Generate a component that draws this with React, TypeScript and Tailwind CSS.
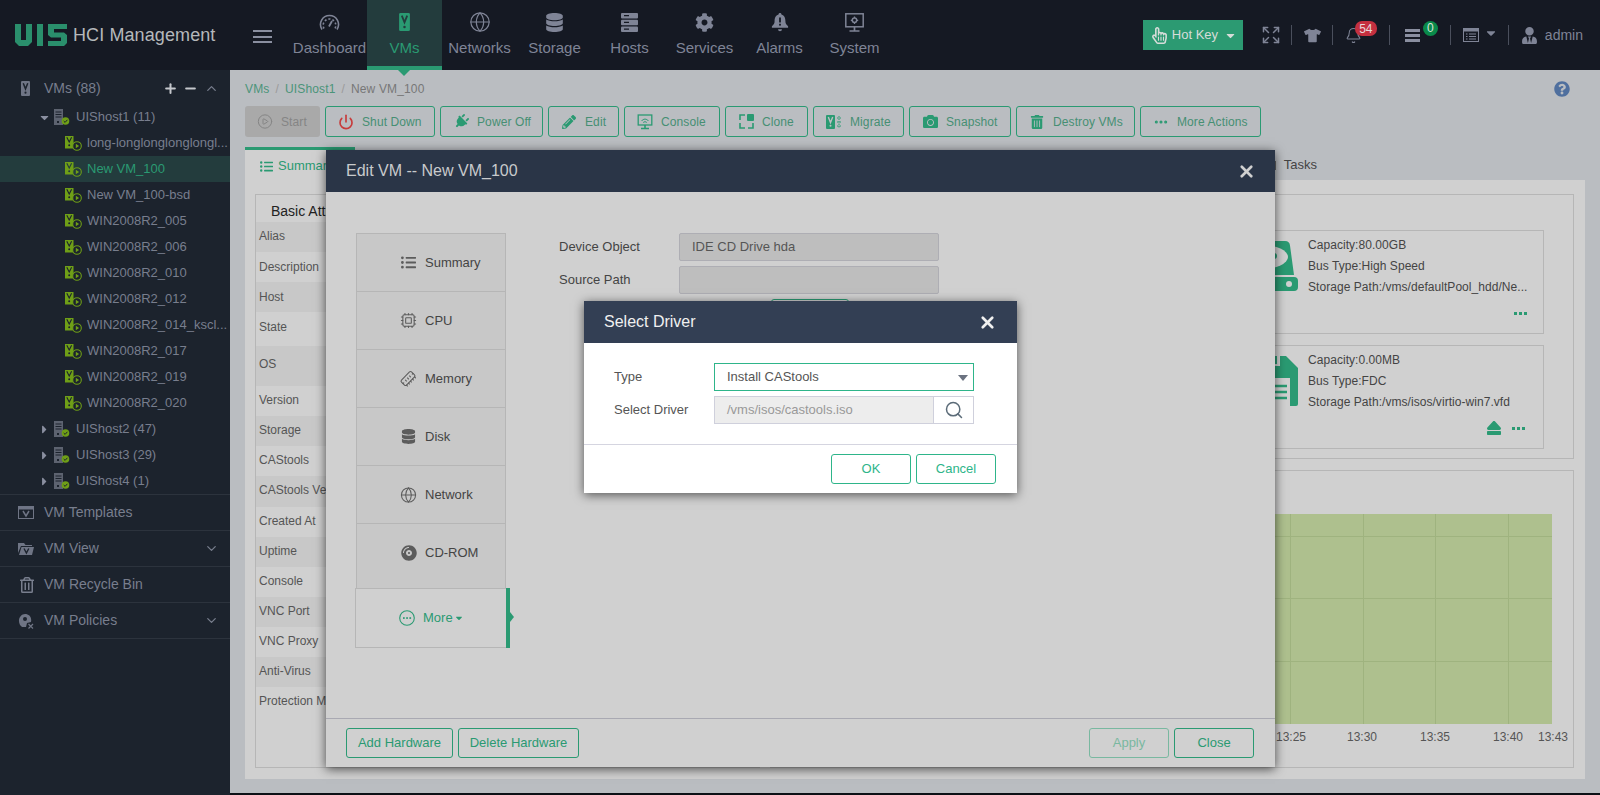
import React from "react";
import { Globe, Power, CirclePlay, Ellipsis, Cpu, MemoryStick, Search, Bell, Expand, Plus, Minus, ChevronUp, ChevronDown, X } from "lucide-react";
import { FaDatabase, FaCog, FaPlug, FaPencilAlt, FaCamera, FaTrashAlt, FaListUl, FaCompactDisc, FaEject, FaTshirt, FaUserTie, FaRegHandPointer, FaCaretDown, FaCaretRight, FaQuestionCircle, FaRegTrashAlt } from "react-icons/fa";

const Vm = ({ w, h, fill, cut }: { w: number; h: number; fill: string; cut: string }) => (
  <svg width={w} height={h} viewBox="0 0 12 20">
    <rect width="12" height="20" rx="1.5" fill={fill} />
    <path d="M3 3l3 7.5L9 3" stroke={cut} strokeWidth="2" fill="none" />
    <circle cx="6" cy="15.5" r="1.4" fill={cut} />
  </svg>
);

const Leaf = ({ bg }: { bg: string }) => (
  <svg width="17" height="15" viewBox="0 0 17 15" className="shrink-0">
    <rect x="0" y="0" width="8.5" height="12.5" fill="#6f9f17" />
    <path d="M1.8 1.2l2.4 4.8 2.4-4.8" stroke={bg} strokeWidth="1.1" fill="none" />
    <circle cx="4.2" cy="9.3" r="1" fill={bg} />
    <circle cx="12" cy="10" r="4.3" fill={bg} stroke="#6f9f17" strokeWidth="1.1" />
    <path d="M10.8 7.8v4.4l3.3-2.2z" fill="#6f9f17" />
  </svg>
);

const Host = () => (
  <svg width="16" height="16" viewBox="0 0 16 16" className="shrink-0">
    <rect x="0" y="0" width="9" height="16" fill="#5d6370" />
    <path d="M1.5 3h6M1.5 5.5h6M1.5 8h6" stroke="#1c232d" strokeWidth="1" />
    <rect x="3" y="12" width="2" height="2" fill="#1c232d" />
    <circle cx="11.5" cy="12" r="3.8" fill="#6f9f17" />
    <path d="M9.7 12l1.4 1.4 2.3-2.6" stroke="#1c232d" strokeWidth="1" fill="none" />
  </svg>
);

const Logo = () => (
  <svg width="52" height="22" viewBox="0 0 52 22" className="shrink-0">
    <path fill="#2a8f6c" d="M0 0H6V16H11V0H17V18L13 22H4L0 18Z" />
    <rect x="22" width="6" height="22" fill="#2a8f6c" />
    <path fill="#2a8f6c" d="M33 0H52V5H39V8.5H49L52 11V19L49 22H33V17H46V13.5H36L33 11Z" />
  </svg>
);

const Gauge = () => (
  <svg width="21" height="17" viewBox="0 0 21 17" fill="none" stroke="#7f8496" strokeWidth="1.6">
    <path d="M3 15.5C-1 9 3.5 1.5 10.5 1.5S22 9 18 15.5" />
    <path d="M5 14.5C2.5 10 6 5 10.5 5S18.5 10 16 14.5" strokeDasharray="2 2" />
    <path d="M10 12.5L13 7" strokeWidth="1.8" />
  </svg>
);

const Rack = () => (
  <svg width="17" height="19" viewBox="0 0 17 19" fill="currentColor">
    <rect width="17" height="5.5" rx="1" />
    <rect y="6.7" width="17" height="5.5" rx="1" />
    <rect y="13.4" width="17" height="5.5" rx="1" />
    <path d="M3 2.7h5M3 9.4h5M3 16.1h5" stroke="#151923" strokeWidth="1.2" />
  </svg>
);

const AlarmBell = () => (
  <svg width="18" height="20" viewBox="0 0 20 22" fill="currentColor">
    <path d="M10 1c1 0 1.6.7 1.6 1.6C15 3.5 16 6.5 16 10c0 3 1 4.2 3 5.6V17.5H1v-1.9C3 14.2 4 13 4 10c0-3.5 1-6.5 4.4-7.4C8.4 1.7 9 1 10 1zM7.8 19h4.4a2.2 2.2 0 01-4.4 0z" />
    <rect x="9" y="6" width="2" height="5.5" fill="#151923" />
    <rect x="9" y="13" width="2" height="2" fill="#151923" />
  </svg>
);

const SystemIcon = () => (
  <svg width="19" height="19" viewBox="0 0 19 19" fill="none" stroke="currentColor">
    <rect x="0.8" y="0.8" width="17.4" height="13" strokeWidth="1.5" />
    <circle cx="9.5" cy="7.3" r="2.2" strokeWidth="1.5" />
    <path d="M9.5 3.6v1.4M9.5 9.6v1.4M5.8 7.3h1.4M11.8 7.3h1.4" strokeWidth="1.3" />
    <path d="M4.5 18h10M9.5 14v4" strokeWidth="1.7" />
  </svg>
);

const navItems: { label: string; icon: React.ReactNode; active?: boolean }[] = [
  { label: "Dashboard", icon: <Gauge /> },
  { label: "VMs", icon: <Vm w={11} h={18} fill="#2a9a72" cut="#233c3d" />, active: true },
  { label: "Networks", icon: <Globe size={22} strokeWidth={1.3} /> },
  { label: "Storage", icon: <FaDatabase size={19} /> },
  { label: "Hosts", icon: <Rack /> },
  { label: "Services", icon: <FaCog size={19} /> },
  { label: "Alarms", icon: <AlarmBell /> },
  { label: "System", icon: <SystemIcon /> },
];

const leaves = ["long-longlonglonglongl...", "New VM_100", "New VM_100-bsd", "WIN2008R2_005", "WIN2008R2_006", "WIN2008R2_010", "WIN2008R2_012", "WIN2008R2_014_kscl...", "WIN2008R2_017", "WIN2008R2_019", "WIN2008R2_020"];

const Console = () => (
  <svg width="16" height="16" viewBox="0 0 15 16" fill="none" stroke="#2a9a72">
    <rect x="0.7" y="1" width="13.6" height="10" strokeWidth="1.3" />
    <path d="M4 7c2-2.5 5-2.5 7 0M5.7 8.5c1-1 2.6-1 3.6 0" strokeWidth="1" />
    <path d="M3.5 14.5h8M7.5 11v3" strokeWidth="1.6" />
  </svg>
);
const Clone = () => (
  <svg width="15" height="15" viewBox="0 0 15 15">
    <rect x="8" y="0" width="7" height="7" rx="1" fill="#2a9a72" />
    <path d="M6 1H1v5M1 9v5h5M9 14h5V9" stroke="#2a9a72" strokeWidth="1.6" fill="none" />
  </svg>
);
const Migrate = () => (
  <svg width="16" height="14" viewBox="0 0 16 14">
    <rect width="9" height="14" rx="1" fill="#2a9a72" />
    <path d="M2.3 2l2.2 5.5L6.7 2" stroke="#bdbfc3" strokeWidth="1.4" fill="none" />
    <circle cx="4.5" cy="10.8" r="1" fill="#bdbfc3" />
    <path d="M13 1v12M11 3h4M11 7h4M11 11h4" stroke="#2a9a72" strokeWidth="1" strokeDasharray="1.5 1" fill="none" />
  </svg>
);

const tools: { label: string; icon: React.ReactNode; cls: string; off?: boolean }[] = [
  { label: "Start", icon: <CirclePlay size={17} strokeWidth={1.5} />, cls: "w-[75px]", off: true },
  { label: "Shut Down", icon: <Power size={18} strokeWidth={2.5} color="#c73c3c" />, cls: "w-[110px]" },
  { label: "Power Off", icon: <FaPlug size={15} color="#2a9a72" className="rotate-45" />, cls: "w-[103px]" },
  { label: "Edit", icon: <FaPencilAlt size={14} color="#2a9a72" />, cls: "w-[71px]" },
  { label: "Console", icon: <Console />, cls: "w-[96px]" },
  { label: "Clone", icon: <Clone />, cls: "w-[83px]" },
  { label: "Migrate", icon: <Migrate />, cls: "w-[91px]" },
  { label: "Snapshot", icon: <FaCamera size={15} color="#2a9a72" />, cls: "w-[102px]" },
  { label: "Destroy VMs", icon: <FaTrashAlt size={14} color="#2a9a72" />, cls: "w-[119px]" },
  { label: "More Actions", icon: <Ellipsis size={16} color="#2a9a72" strokeWidth={2.6} />, cls: "w-[121px]" },
];

const attrs: { label: string; cls: string }[] = [
  { label: "Alias", cls: "h-[30px] bg-[#c8c8c8] pt-[6px]" },
  { label: "Description", cls: "h-[30px] pt-[7px]" },
  { label: "Host", cls: "h-[30px] bg-[#c8c8c8] pt-[7px]" },
  { label: "State", cls: "h-[34px] pt-[7px]" },
  { label: "OS", cls: "h-[40px] bg-[#c8c8c8] pt-[10px]" },
  { label: "Version", cls: "h-[30px] pt-[6px]" },
  { label: "Storage", cls: "h-[30px] bg-[#c8c8c8] pt-[6px]" },
  { label: "CAStools", cls: "h-[30px] pt-[6px]" },
  { label: "CAStools Version", cls: "h-[31px] bg-[#c8c8c8] pt-[6px]" },
  { label: "Created At", cls: "h-[30px] pt-[6px]" },
  { label: "Uptime", cls: "h-[30px] bg-[#c8c8c8] pt-[6px]" },
  { label: "Console", cls: "h-[30px] pt-[6px]" },
  { label: "VNC Port", cls: "h-[30px] bg-[#c8c8c8] pt-[6px]" },
  { label: "VNC Proxy", cls: "h-[30px] pt-[6px]" },
  { label: "Anti-Virus", cls: "h-[30px] bg-[#c8c8c8] pt-[6px]" },
  { label: "Protection Mode", cls: "h-[30px] pt-[6px]" },
];

const Dots = () => (
  <div className="flex gap-[2px]">
    <span className="h-[3px] w-[3px] bg-[#2a9a72]" />
    <span className="h-[3px] w-[3px] bg-[#2a9a72]" />
    <span className="h-[3px] w-[3px] bg-[#2a9a72]" />
  </div>
);

const Hdd = () => (
  <svg width="72" height="50" viewBox="0 0 72 50">
    <path d="M13 0H59a5 5 0 015 4.5L68 34H4L8 4.5A5 5 0 0113 0Z" fill="#2a9a72" />
    <ellipse cx="36" cy="16" rx="26" ry="12" fill="#d0d0d0" />
    <ellipse cx="48" cy="15" rx="3" ry="3" fill="#2a9a72" />
    <rect x="0" y="36" width="72" height="14" rx="4" fill="#2a9a72" />
    <circle cx="63" cy="43" r="3" fill="#d0d0d0" />
  </svg>
);
const Floppy = () => (
  <svg width="50" height="50" viewBox="0 0 50 50">
    <path d="M2 0H38L50 12V48a2 2 0 01-2 2H2a2 2 0 01-2-2V2a2 2 0 012-2Z" fill="#2a9a72" />
    <rect x="10" y="0" width="22" height="10" fill="#d0d0d0" />
    <rect x="24" y="0" width="5" height="8" fill="#2a9a72" />
    <rect x="8" y="22" width="34" height="28" fill="#d0d0d0" />
    <path d="M11 30h28M11 36h28M11 42h28" stroke="#2a9a72" strokeWidth="2.4" />
  </svg>
);

const Card = ({ icon, lines, extra }: { icon: React.ReactNode; lines: string[]; extra?: React.ReactNode }) => (
  <div className="flex h-[104px] w-[513px] border border-[#b6b6b6]">
    <div className="flex w-[266px] shrink-0 justify-end pt-[10px]">{icon}</div>
    <div className="ml-[10px] flex-1 pt-[4px] pr-[18px] text-[12px] leading-[21px] tracking-[0.05px] text-[#444]">
      {lines.map((l) => (
        <div key={l} className="whitespace-nowrap">{l}</div>
      ))}
      <div className="mt-[8px] flex h-[14px] items-center justify-end gap-[10px]">
        {extra}
        <Dots />
      </div>
    </div>
  </div>
);

const MoreIcon = () => (
  <svg width="16" height="16" viewBox="0 0 16 16" fill="none" stroke="currentColor" className="shrink-0">
    <circle cx="8" cy="8" r="7.3" strokeWidth="1.1" />
    <rect x="4" y="7.2" width="1.7" height="1.7" fill="currentColor" stroke="none" />
    <rect x="7.2" y="7.2" width="1.7" height="1.7" fill="currentColor" stroke="none" />
    <rect x="10.4" y="7.2" width="1.7" height="1.7" fill="currentColor" stroke="none" />
  </svg>
);

const hardware: { label: string; icon: React.ReactNode; cls: string }[] = [
  { label: "Summary", icon: <FaListUl size={15} />, cls: "h-[59px]" },
  { label: "CPU", icon: <Cpu size={17} strokeWidth={1.5} />, cls: "h-[59px]" },
  { label: "Memory", icon: <MemoryStick size={18} strokeWidth={1.5} className="-rotate-45" />, cls: "h-[59px]" },
  { label: "Disk", icon: <FaDatabase size={15} />, cls: "h-[59px]" },
  { label: "Network", icon: <Globe size={18} strokeWidth={1.5} />, cls: "h-[59px]" },
  { label: "CD-ROM", icon: <FaCompactDisc size={16} />, cls: "h-[66px] pb-[7px]" },
];

const GBtn = ({ label, cls, faded }: { label: string; cls: string; faded?: boolean }) => (
  <div className={`flex h-[30px] items-center justify-center rounded-[3px] border text-[13px] ${faded ? "border-[#79b8a0] text-[#79b8a0]" : "border-[#2a9a72] text-[#2a9a72]"} ${cls}`}>{label}</div>
);

function Chart() {
  const xs = [519, 592, 664, 737];
  const ys = [65, 127, 190];
  const labels: [number, string][] = [[520, "13:25"], [591, "13:30"], [664, "13:35"], [737, "13:40"], [782, "13:43"]];
  return (
    <svg width="802" height="296" viewBox="0 0 802 296" className="block">
      <rect x="30" y="43" width="751" height="210" fill="#aec08e" />
      {xs.map((x) => (
        <line key={x} x1={x + 0.5} x2={x + 0.5} y1="43" y2="253" stroke="#9fb37f" />
      ))}
      {ys.map((y) => (
        <line key={y} x1="30" x2="781" y1={y + 0.5} y2={y + 0.5} stroke="#9fb37f" />
      ))}
      {labels.map(([x, t]) => (
        <text key={t} x={x} y="270" textAnchor="middle" fontSize="12" fill="#555" fontFamily="Liberation Sans, Arial, sans-serif">{t}</text>
      ))}
    </svg>
  );
}

export default function App() {
  return (
    <div className="relative flex h-[795px] w-[1600px] flex-col overflow-hidden bg-[#babdc1] font-['Liberation_Sans',Arial,sans-serif]">
      {/* top bar */}
      <header className="flex h-[70px] shrink-0 bg-[#151923]">
        <div className="flex w-[253px] shrink-0 items-center pb-[1px] pl-[15px]">
          <Logo />
          <span className="mt-[2px] ml-[6px] text-[18px] tracking-[0.1px] text-[#b5b8bb]">HCI Management</span>
        </div>
        <div className="flex w-[39px] shrink-0 flex-col gap-[3.5px] pt-[30px]">
          <span className="h-[2px] w-[19px] bg-[#8a8fa0]" />
          <span className="h-[2px] w-[19px] bg-[#8a8fa0]" />
          <span className="h-[2px] w-[19px] bg-[#8a8fa0]" />
        </div>
        {navItems.map((n) => (
          <div key={n.label} className={`relative flex w-[75px] flex-col items-center ${n.active ? "bg-[#233c3d] text-[#2a9a72]" : "text-[#7f8496]"}`}>
            <div className="mt-[13px] flex h-[18px] items-center">{n.icon}</div>
            <div className="mt-[8px] whitespace-nowrap text-[15px] leading-[17px]">{n.label}</div>
            {n.active && (
              <>
                <span className="absolute bottom-0 left-0 h-[4px] w-full bg-[#2a9a72]" />
                <span className="absolute top-[70px] left-[31px] h-0 w-0 border-x-[6px] border-t-[6px] border-x-transparent border-t-[#2a9a72]" />
              </>
            )}
          </div>
        ))}
        <div className="ml-auto flex items-center pr-[17px] text-[#7f8496]">
          <div className="flex h-[30px] w-[100px] items-center bg-[#2c9a72] pl-[8px] text-[13px] text-[#d6dcd9]">
            <FaRegHandPointer size={17} />
            <span className="ml-[4px]">Hot Key</span>
            <FaCaretDown size={13} className="ml-[6px]" />
          </div>
          <Expand size={20} strokeWidth={1.8} className="ml-[18px]" />
          <span className="ml-[10px] h-[20px] w-px bg-[#4a4f5c]" />
          <FaTshirt size={17} className="ml-[12px]" />
          <span className="ml-[11px] h-[20px] w-px bg-[#4a4f5c]" />
          <div className="relative ml-[12px] h-[16px] w-[44px]">
            <Bell size={17} strokeWidth={1.5} />
            <span className="absolute -top-[6px] left-[10px] flex h-[15px] w-[22px] items-center justify-center rounded-[7px] bg-[#c4303f] text-[12px] text-[#e8d8da]">54</span>
          </div>
          <span className="h-[20px] w-px bg-[#4a4f5c]" />
          <div className="relative ml-[15px] flex h-[13px] w-[45px] flex-col gap-[2px]">
            <span className="h-[3px] w-[15px] bg-[#8a8fa0]" />
            <span className="h-[3px] w-[15px] bg-[#8a8fa0]" />
            <span className="h-[3px] w-[15px] bg-[#8a8fa0]" />
            <span className="absolute -top-[8px] left-[18px] flex h-[15px] w-[15px] items-center justify-center rounded-full bg-[#0a8a4a] text-[12px] text-[#d8e4dc]">0</span>
          </div>
          <span className="h-[20px] w-px bg-[#4a4f5c]" />
          <svg width="16" height="14" viewBox="0 0 16 14" className="ml-[12px]" fill="none" stroke="#7f8496">
            <rect x="0.5" y="0.5" width="15" height="13" />
            <rect x="0" y="0" width="16" height="3" fill="#7f8496" />
            <path d="M3 6h1.5M6 6h7M3 8.5h1.5M6 8.5h7M3 11h1.5M6 11h7" />
          </svg>
          <FaCaretDown size={14} className="-mt-[5px] ml-[5.5px]" />
          <span className="ml-[9.5px] h-[20px] w-px bg-[#4a4f5c]" />
          <FaUserTie size={17} className="ml-[12px]" />
          <span className="ml-[7px] text-[14px]">admin</span>
        </div>
      </header>

      <div className="flex min-h-0 flex-1">
        {/* sidebar */}
        <aside className="w-[230px] shrink-0 bg-[#1c232d] text-[13px] text-[#787e8d]">
          <div className="flex h-[34px] items-center pt-[2px] pr-[11px] pl-[21px]">
            <Vm w={9} h={15} fill="#6f7585" cut="#1c232d" />
            <span className="ml-[14px] text-[14px]">VMs (88)</span>
            <Plus size={15} strokeWidth={3.2} className="ml-auto text-[#c4c7cc]" />
            <Minus size={15} strokeWidth={3.2} className="ml-[5px] text-[#c4c7cc]" />
            <ChevronUp size={15} strokeWidth={2} className="ml-[6px]" />
          </div>
          <div className="flex h-[26px] items-center pl-[38px]">
            <FaCaretDown size={13} className="text-[#8a8fa0]" />
            <span className="ml-[3px]"><Host /></span>
            <span className="ml-[6px]">UIShost1 (11)</span>
          </div>
          {leaves.map((l) => {
            const sel = l === "New VM_100";
            return (
              <div key={l} className={`flex h-[26px] items-center pl-[65px] ${sel ? "bg-[#233c3d] text-[#2a9a72]" : ""}`}>
                <Leaf bg={sel ? "#233c3d" : "#1c232d"} />
                <span className="ml-[5px] whitespace-nowrap">{l}</span>
              </div>
            );
          })}
          {["UIShost2 (47)", "UIShost3 (29)", "UIShost4 (1)"].map((h) => (
            <div key={h} className="flex h-[26px] items-center pl-[38px]">
              <FaCaretRight size={13} className="text-[#8a8fa0]" />
              <span className="ml-[3px]"><Host /></span>
              <span className="ml-[6px]">{h}</span>
            </div>
          ))}
          <div className="border-b border-[#2c333d]" />
          <div className="flex h-[36px] items-center border-b border-[#2c333d] pl-[18px] text-[14px]">
            <svg width="16" height="13" viewBox="0 0 16 13" fill="none" stroke="#6f7585">
              <rect x="0.5" y="0.5" width="15" height="12" />
              <rect x="0" y="0" width="16" height="3" fill="#6f7585" />
              <path d="M5 5l3 5 3-5" strokeWidth="1.5" />
            </svg>
            <span className="ml-[10px]">VM Templates</span>
          </div>
          <div className="flex h-[36px] items-center border-b border-[#2c333d] pr-[11px] pl-[18px] text-[14px]">
            <svg width="16" height="13" viewBox="0 0 16 13">
              <path d="M0 1h6l1.5 2H14v1H3L0 11z" fill="#6f7585" />
              <path d="M3.5 5H16l-2 8H1z" fill="#6f7585" />
              <path d="M6 6.5l2.4 4.5 2.4-4.5" stroke="#1c232d" strokeWidth="1.4" fill="none" />
            </svg>
            <span className="ml-[10px]">VM View</span>
            <ChevronDown size={15} className="ml-auto" />
          </div>
          <div className="flex h-[36px] items-center border-b border-[#2c333d] pl-[19px] text-[14px]">
            <FaRegTrashAlt size={16} />
            <span className="ml-[9px]">VM Recycle Bin</span>
          </div>
          <div className="flex h-[36px] items-center border-b border-[#2c333d] pr-[11px] pl-[18px] text-[14px]">
            <svg width="16" height="16" viewBox="0 0 16 16" fill="none">
              <path d="M2 12C-1 6 3 1 7 1s7 3 6 8l-4 1-1 4H4z" fill="#6f7585" />
              <circle cx="7" cy="6" r="2" fill="#1c232d" />
              <path d="M10.5 11l4.5 4.5M15 11l-4.5 4.5" stroke="#6f7585" strokeWidth="1.2" />
            </svg>
            <span className="ml-[10px]">VM Policies</span>
            <ChevronDown size={15} className="ml-auto" />
          </div>
        </aside>

        {/* main */}
        <main className="flex min-w-0 flex-1 flex-col text-[12px]">
          <div className="flex h-[36px] shrink-0 items-center px-[15px] pt-[2px] tracking-[0.15px]">
            <span className="text-[#4b9479]">VMs</span>
            <span className="mx-[6px] text-[#9a9a9a]">/</span>
            <span className="text-[#4b9479]">UIShost1</span>
            <span className="mx-[6px] text-[#9a9a9a]">/</span>
            <span className="text-[#777]">New VM_100</span>
            <FaQuestionCircle size={16} color="#4f6f9e" className="mr-[15px] ml-auto" />
          </div>
          <div className="flex h-[31px] shrink-0 gap-[5px] pl-[15px] tracking-[0.1px]">
            {tools.map((t) => (
              <div key={t.label} className={`flex items-center whitespace-nowrap rounded-[3px] ${t.cls} ${t.off ? "bg-[#a9a9a9] text-[#858585]" : "border border-[#2a9a72] text-[#468f73]"}`}>
                <span className="ml-[12px] flex w-[16px] items-center justify-center">{t.icon}</span>
                <span className="ml-[8px]">{t.label}</span>
              </div>
            ))}
          </div>
          <div className="mt-[10px] flex h-[33px] shrink-0 pl-[15px]">
            <div className="flex w-[110px] items-center border-t-[3px] border-[#2a9a72] bg-[#d0d0d0] pt-[2px] pl-[15px] text-[13px] text-[#2a9a72]">
              <FaListUl size={13} />
              <span className="ml-[5px]">Summary</span>
            </div>
            <div className="ml-auto flex items-center pt-[3px] pr-[283px] text-[13px] text-[#444]">
              <span className="mr-[8px] h-[9px] w-[3px] bg-[#666]" />
              Tasks
            </div>
          </div>
          <section className="mx-[15px] flex h-[599px] shrink-0 gap-[10px] bg-[#d0d0d0] pt-[14px] pr-[11px] pb-[11px] pl-[10px]">
            <div className="w-[505px] border border-[#b6b6b6]">
              <div className="h-[27px] pt-[8px] pl-[15px] text-[14px] leading-[16px] text-[#222]">Basic Attributes</div>
              {attrs.map((a) => (
                <div key={a.label} className={`whitespace-nowrap pl-[3px] leading-[16px] text-[#555] ${a.cls}`}>{a.label}</div>
              ))}
            </div>
            <div className="flex min-w-0 flex-1 flex-col gap-[11px]">
              <div className="flex h-[265px] flex-col items-end gap-[11px] border border-[#b6b6b6] pt-[35px] pr-[29px]">
                <Card icon={<Hdd />} lines={["Capacity:80.00GB", "Bus Type:High Speed", "Storage Path:/vms/defaultPool_hdd/Ne..."]} />
                <Card icon={<Floppy />} lines={["Capacity:0.00MB", "Bus Type:FDC", "Storage Path:/vms/isos/virtio-win7.vfd"]} extra={<FaEject size={16} color="#2a9a72" />} />
              </div>
              <div className="h-[298px] border border-[#b6b6b6]">
                <Chart />
              </div>
            </div>
          </section>
          <div className="mt-auto h-[2px] bg-[#0c1016]" />
        </main>
      </div>

      {/* Edit VM dialog */}
      <div className="absolute top-[150px] left-[326px] flex h-[617px] w-[949px] flex-col bg-[#d0d0d0] shadow-[0_2px_10px_rgba(0,0,0,0.65)]">
        <div className="flex h-[42px] shrink-0 items-center justify-between bg-[#2a3547] pr-[19px] pl-[20px] text-[16px] text-[#c8cacc]">
          <span>Edit VM -- New VM_100</span>
          <X size={19} strokeWidth={3.4} className="text-[#d0d0d0]" />
        </div>
        <div className="flex min-h-0 flex-1">
          <div className="mt-[41px] ml-[30px] flex w-[150px] shrink-0 flex-col text-[13px] text-[#444]">
            {hardware.map((h, i) => (
              <div key={h.label} className={`flex items-center border border-[#b6b6b6] bg-[#c8c8c8] pl-[43px] ${h.cls} ${i > 0 ? "-mt-px" : ""}`}>
                <span className="flex w-[17px] justify-center text-[#5c5c5c]">{h.icon}</span>
                <span className="ml-[8px]">{h.label}</span>
              </div>
            ))}
            <div className="relative -mt-px -ml-px flex h-[60px] w-[151px] items-center border border-r-0 border-[#b6b6b6] pl-[43px] text-[#2a9a72]">
              <MoreIcon />
              <span className="ml-[8px]">More</span>
              <FaCaretDown size={10} className="ml-[1px]" />
              <span className="absolute top-[-1px] right-[-4px] h-[60px] w-[4px] bg-[#2a9a72]" />
              <span className="absolute top-[23px] right-[-8px] h-0 w-0 border-y-[5px] border-l-[4px] border-y-transparent border-l-[#2a9a72]" />
            </div>
          </div>
          <div className="mt-[41px] ml-[53px] text-[13px] text-[#444]">
            <div className="flex h-[28px] items-center">
              <span className="w-[120px]">Device Object</span>
              <div className="flex h-[28px] w-[260px] items-center rounded-[2px] border border-[#aeaeb4] bg-[#bebebe] pl-[12px] text-[#555]">IDE CD Drive hda</div>
            </div>
            <div className="mt-[5px] flex h-[28px] items-center">
              <span className="w-[120px]">Source Path</span>
              <div className="h-[28px] w-[260px] rounded-[2px] border border-[#aeaeb4] bg-[#bebebe]" />
            </div>
            <div className="mt-[5px] ml-[212px] h-[28px] w-[78px] rounded-[3px] border border-[#2a9a72]" />
          </div>
        </div>
        <div className="flex h-[49px] shrink-0 justify-between border-t border-[#a9a9b2] pt-[9px] pr-[21px] pl-[20px]">
          <div className="flex gap-[5px]">
            <GBtn label="Add Hardware" cls="w-[107px]" />
            <GBtn label="Delete Hardware" cls="w-[121px]" />
          </div>
          <div className="flex gap-[5px]">
            <GBtn label="Apply" cls="w-[80px]" faded />
            <GBtn label="Close" cls="w-[80px]" />
          </div>
        </div>
      </div>

      {/* Select Driver dialog */}
      <div className="absolute top-[301px] left-[584px] flex h-[192px] w-[433px] flex-col bg-white shadow-[0_2px_10px_rgba(0,0,0,0.6)]">
        <div className="flex h-[42px] shrink-0 items-center justify-between bg-[#333f54] px-[20px] text-[16px] text-[#f0f0f0]">
          <span>Select Driver</span>
          <X size={19} strokeWidth={3.4} />
        </div>
        <div className="flex h-[102px] shrink-0 flex-col gap-[5px] border-b border-[#d5d5e0] pt-[20px] pl-[30px] text-[13px] text-[#555]">
          <div className="flex h-[28px] items-center">
            <span className="w-[100px]">Type</span>
            <div className="relative flex h-[28px] w-[260px] items-center border border-[#2eb58a] pl-[12px]">
              Install CAStools
              <span className="absolute top-[11px] right-[5px] h-0 w-0 border-x-[5px] border-t-[6px] border-x-transparent border-t-[#6b7280]" />
            </div>
          </div>
          <div className="flex h-[28px] items-center">
            <span className="w-[100px]">Select Driver</span>
            <div className="flex h-[28px] w-[260px] border border-[#cfd0dc]">
              <div className="flex w-[218px] items-center bg-[#ededed] pl-[12px] text-[#999]">/vms/isos/castools.iso</div>
              <div className="flex flex-1 items-center justify-center border-l border-[#cfd0dc] text-[#5b6b78]">
                <Search size={20} strokeWidth={1.8} />
              </div>
            </div>
          </div>
        </div>
        <div className="flex flex-1 justify-end gap-[5px] pt-[9px] pr-[21px]">
          <div className="flex h-[30px] w-[80px] items-center justify-center rounded-[3px] border border-[#2eb58a] text-[13px] text-[#2eb58a]">OK</div>
          <div className="flex h-[30px] w-[80px] items-center justify-center rounded-[3px] border border-[#2eb58a] text-[13px] text-[#2eb58a]">Cancel</div>
        </div>
      </div>
    </div>
  );
}
